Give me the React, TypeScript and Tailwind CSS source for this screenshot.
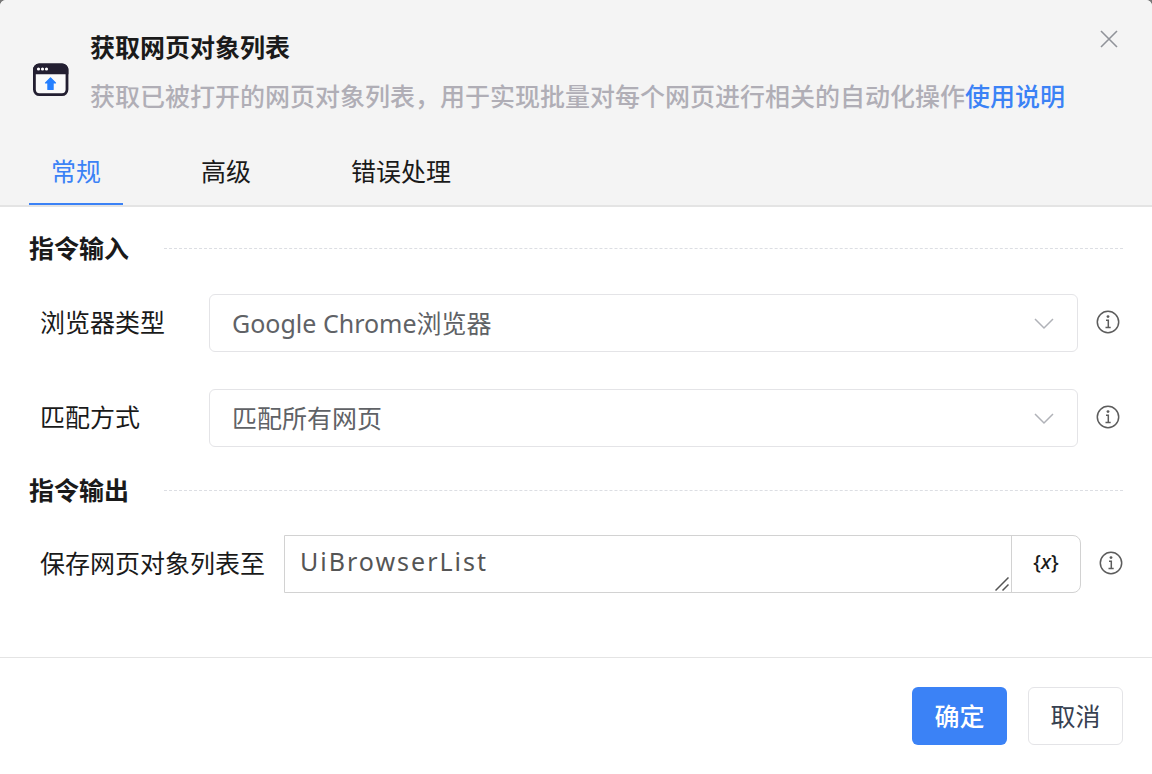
import { useState } from "react";
import type { ReactNode } from "react";

interface SectionProps {
  title: string;
  children: ReactNode;
}

interface SelectRowProps {
  id: string;
  label: string;
  options: string[];
}

const tabs = ["常规", "高级", "错误处理"];

const CommandIcon = () => (
  <svg width="36" height="34" viewBox="0 0 36 34" className="shrink-0" aria-hidden="true">
    <rect x="1.4" y="2" width="32.6" height="29.6" rx="5" fill="#fafafa" stroke="#231f31" strokeWidth="2.8" />
    <path d="M0 11.300V7a6 6 0 0 1 6-6.400h23.400a6 6 0 0 1 6 6.400v4.300z" fill="#231f31" />
    <circle cx="5.500" cy="6" r="1.600" fill="#fff" />
    <circle cx="9.500" cy="6" r="1.600" fill="#fff" />
    <circle cx="13.500" cy="6" r="1.600" fill="#fff" />
    <path
      d="M17.500 14.800l5 5.200h-2.400v6.500h-5.200v-6.500h-2.400z"
      fill="#2680ff"
      stroke="#2680ff"
      strokeWidth="1.200"
      strokeLinejoin="round"
    />
  </svg>
);

const InfoButton = () => (
  <button type="button" aria-label="帮助" className="mb-[3px] ml-[18px] shrink-0 text-[#5c5c5c]">
    <svg width="24" height="24" viewBox="0 0 24 24" fill="none" stroke="currentColor" className="block">
      <circle cx="12" cy="12" r="10.700" strokeWidth="1.500" />
      <circle cx="12" cy="6.600" r="1.400" fill="currentColor" stroke="none" />
      <path d="M10 10.200h2.300v7M9.500 17.400h5.200" strokeWidth="1.500" />
    </svg>
  </button>
);

const Section = ({ title, children }: SectionProps) => (
  <section>
    <div className="flex h-9 items-center gap-[35px]">
      <h2 className="font-bold">{title}</h2>
      <div className="flex-1 border-t border-dashed border-[#dcdee3]" />
    </div>
    {children}
  </section>
);

const SelectRow = ({ id, label, options }: SelectRowProps) => (
  <div className="flex items-center pr-[3px] pl-[11px]">
    <label htmlFor={id} className="w-[169px] shrink-0 pb-[3px]">
      {label}
    </label>
    <div className="relative flex-1">
      <select
        id={id}
        className="block h-[58px] w-full appearance-none rounded-md border border-[#e4e4e7] bg-white px-[22px] text-[#606266] outline-none"
      >
        {options.map((option) => (
          <option key={option}>{option}</option>
        ))}
      </select>
      <svg
        width="20"
        height="12"
        viewBox="0 0 20 12"
        fill="none"
        stroke="#b0b2b8"
        strokeWidth="1.500"
        className="pointer-events-none absolute top-6 right-6"
        aria-hidden="true"
      >
        <path d="M1 1l9 9 9-9" />
      </svg>
    </div>
    <InfoButton />
  </div>
);

export default function App() {
  const [activeTab, setActiveTab] = useState(tabs[0]);
  const [variable, setVariable] = useState("UiBrowserList");

  return (
    <div className="min-h-screen bg-[#777] font-['Noto_Sans','Noto_Sans_CJK_SC',sans-serif] text-[25px] leading-9 text-[#1a1a1a]">
      <div role="dialog" aria-labelledby="dialog-title" className="flex min-h-screen flex-col rounded-t-md bg-white">
        <header className="rounded-t-md border-b-2 border-[#e4e4e4] bg-[#f4f4f4] px-[29px]">
          <div className="flex pt-[29px]">
            <div className="mt-[34px] mr-[21px] ml-1">
              <CommandIcon />
            </div>
            <div className="min-w-0 flex-1">
              <div className="flex items-start justify-between">
                <h1 id="dialog-title" className="font-bold">
                  获取网页对象列表
                </h1>
                <button type="button" aria-label="关闭" className="mr-1 text-[#909399]">
                  <svg width="20" height="20" viewBox="0 0 20 20" stroke="currentColor" strokeWidth="1.600" className="block">
                    <path d="M2 2l16 16M18 2L2 18" />
                  </svg>
                </button>
              </div>
              <p className="mt-[13px] font-medium text-[#b0aeb6]">
                获取已被打开的网页对象列表，用于实现批量对每个网页进行相关的自动化操作
                <a href="#help" className="text-[#3b82f6]">
                  使用说明
                </a>
              </p>
            </div>
          </div>
          <div role="tablist" className="mt-[23px] flex gap-14">
            {tabs.map((tab) => (
              <button
                key={tab}
                type="button"
                role="tab"
                aria-selected={tab === activeTab}
                onClick={() => setActiveTab(tab)}
                className={`h-[68px] border-b-2 px-[22px] pt-0.5 ${
                  tab === activeTab ? "border-[#3b82f6] text-[#3b82f6]" : "border-transparent"
                }`}
              >
                {tab}
              </button>
            ))}
          </div>
        </header>

        <main className="flex flex-1 flex-col gap-[25px] px-[29px] pt-[23px] pb-16">
          <Section title="指令输入">
            <div className="mt-7 flex flex-col gap-[37px]">
              <SelectRow id="browser-type" label="浏览器类型" options={["Google Chrome浏览器", "Microsoft Edge浏览器"]} />
              <SelectRow id="match-mode" label="匹配方式" options={["匹配所有网页", "根据标题匹配", "根据网址匹配"]} />
            </div>
          </Section>

          <Section title="指令输出">
            <div className="mt-[27px] flex items-center pl-[11px]">
              <label htmlFor="output-name" className="mr-[19px] shrink-0 pb-[3px]">
                保存网页对象列表至
              </label>
              <div className="flex h-[58px] min-w-0 flex-1 rounded-r-lg border border-[#d2d2d2]">
                <div className="relative min-w-0 flex-1">
                  <textarea
                    id="output-name"
                    rows={1}
                    value={variable}
                    onChange={(e) => setVariable(e.target.value)}
                    className="block h-14 w-full resize-none overflow-hidden px-[15px] py-[7px] tracking-[2px] text-[#555] outline-none"
                  />
                  <svg
                    width="14"
                    height="14"
                    viewBox="0 0 14 14"
                    stroke="#555"
                    strokeWidth="1.500"
                    className="pointer-events-none absolute right-0.5 bottom-px"
                    aria-hidden="true"
                  >
                    <path d="M0.500 13.500L13.500 0.500M7.500 13.500L13.500 7.500" />
                  </svg>
                </div>
                <button type="button" className="w-[69px] border-l border-[#d2d2d2] pb-1 text-[20px] font-medium">
                  {"{"}
                  <i>x</i>
                  {"}"}
                </button>
              </div>
              <InfoButton />
            </div>
          </Section>
        </main>

        <footer className="flex justify-end gap-[21px] border-t border-[#e4e4e4] p-[29px]">
          <button type="button" className="h-[58px] min-w-[95px] rounded-md bg-[#3b82f6] px-5 font-medium text-white">
            确定
          </button>
          <button type="button" className="h-[58px] min-w-[95px] rounded-md border border-[#e4e4e7] px-5 text-[#374151]">
            取消
          </button>
        </footer>
      </div>
    </div>
  );
}
